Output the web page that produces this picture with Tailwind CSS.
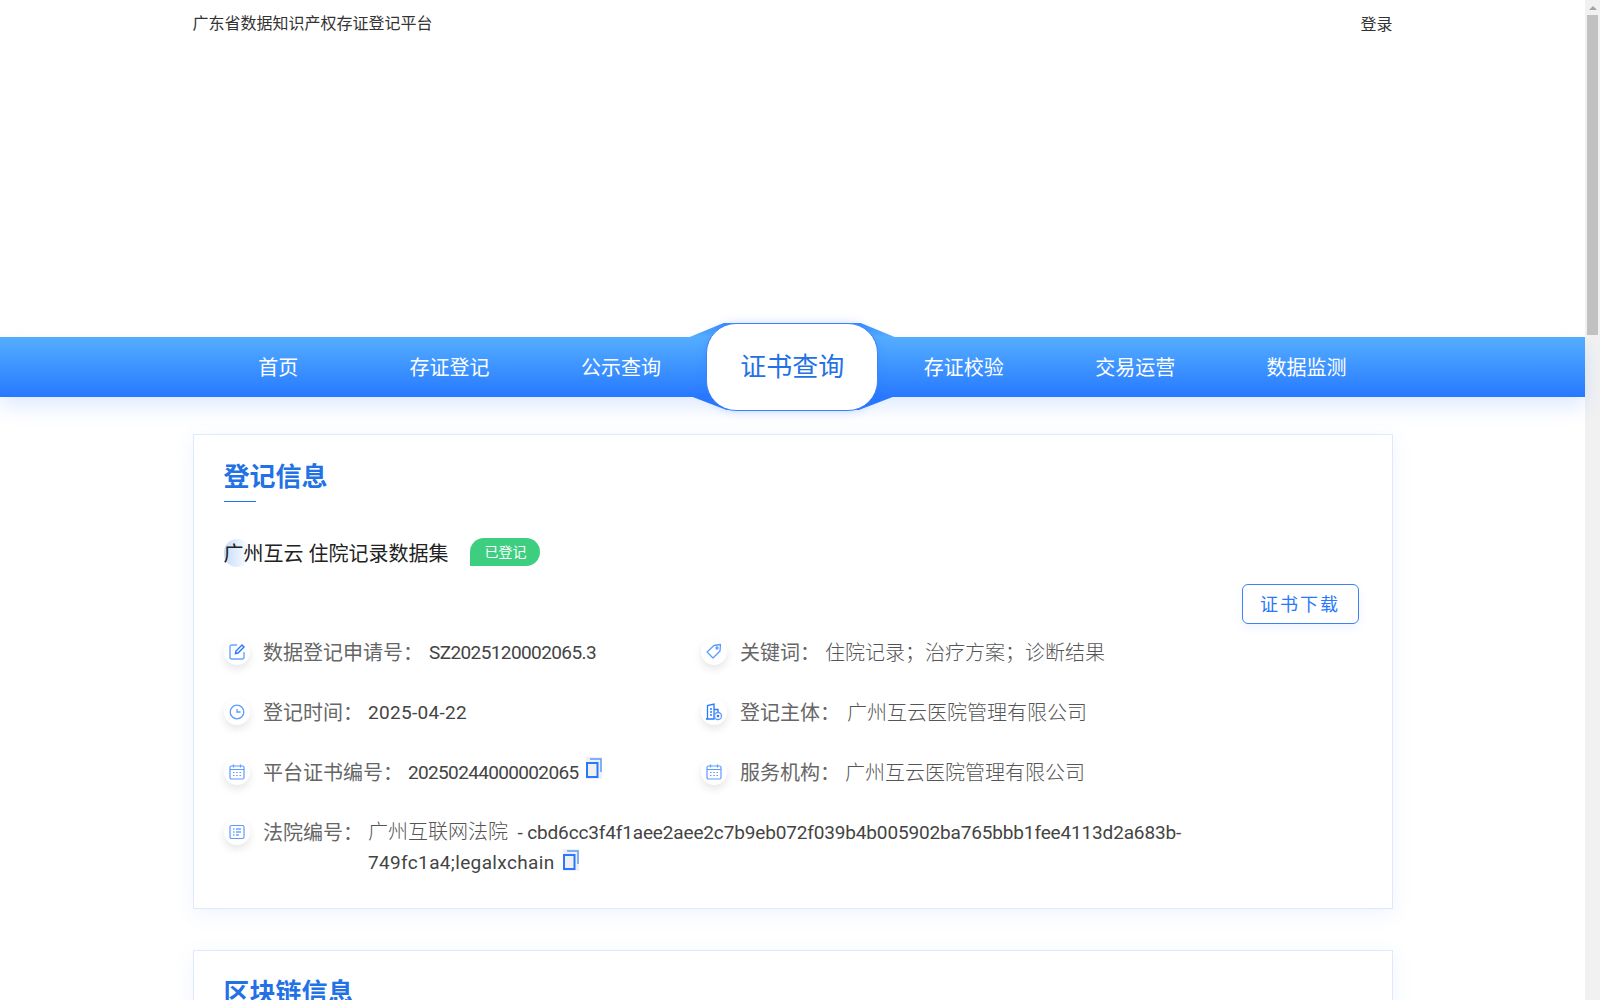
<!DOCTYPE html>
<html lang="zh"><head><meta charset="utf-8"><script src="https://cdn.jsdelivr.net/npm/@tailwindcss/browser@4"></script></head>
<body class="bg-white h-screen overflow-hidden flex font-['Roboto','Noto_Sans_CJK_SC',sans-serif] text-[#333]">
<div class="flex-1 min-w-0">
<header class="h-[323px]">
  <div class="w-[1200px] mx-auto flex justify-between pt-3 text-base leading-[24px]"><span>广东省数据知识产权存证登记平台</span><span class="mt-px">登录</span></div>
</header>
<nav class="relative h-[87px]">
  <div class="absolute left-0 right-0 top-[14px] h-[60px] bg-gradient-to-b from-[#55adff] to-[#2878ff] shadow-[0_10px_20px_rgba(40,120,255,0.15)]"></div>
  <div class="relative w-[1200px] mx-auto h-full flex items-center text-white text-xl">
    <a class="w-[171.4px] shrink-0 text-center pt-0.5">首页</a>
    <a class="w-[171.4px] shrink-0 text-center pt-0.5">存证登记</a>
    <a class="w-[171.4px] shrink-0 text-center pt-0.5">公示查询</a>
    <div class="relative w-[171.4px] shrink-0 h-full flex justify-center items-center">
      <div class="absolute top-0 left-[-17px] w-[205px] h-[14px] bg-gradient-to-b from-[#3a8cff] to-[#55adff] [clip-path:polygon(0_14px,34px_0,171px_0,205px_14px)]"></div>
      <div class="absolute top-[74px] left-[-14px] w-[200px] h-[13px] bg-[#2878ff] [clip-path:polygon(0_0,200px_0,166px_13px,34px_13px)]"></div>
      <a class="relative shrink-0 w-[172px] h-[88px] rounded-[30px] bg-white border border-[#3b82f6] flex items-center justify-center pt-0.5 text-[#2272e6] text-[26px] shadow-[0_0_10px_rgba(40,120,255,0.25)]">证书查询</a>
    </div>
    <a class="w-[171.4px] shrink-0 text-center pt-0.5">存证校验</a>
    <a class="w-[171.4px] shrink-0 text-center pt-0.5">交易运营</a>
    <a class="w-[171.4px] shrink-0 text-center pt-0.5">数据监测</a>
  </div>
</nav>
<main class="w-[1200px] mx-auto pt-6">
  <section class="border border-[#dfe9fb] h-[475px] px-[30px] pt-6 shadow-[0_5px_20px_rgba(40,120,255,0.08)]">
    <h2 class="text-[26px] font-bold text-[#2272e6] leading-[36px]">登记信息</h2>
    <div class="w-8 h-px bg-[#2272e6] mt-1.5"></div>
    <div class="relative flex items-center mt-[37px] h-7 text-xl">
      <span class="absolute left-0 top-0 w-[26px] h-7 rounded-full bg-gradient-to-r from-[#c6dcfb] to-white"></span>
      <span class="relative pt-px text-[#222]">广州互云 住院记录数据集</span>
      <span class="relative ml-[22px] -mt-0.5 w-[70px] text-center bg-[#3dce80] text-white text-sm rounded-[14px_14px_14px_0] h-7 leading-7">已登记</span>
    </div>
    <div class="flex justify-end mt-[17px] mr-[3px]"><button class="w-[117px] h-10 pt-px border border-[#3b82f6] rounded-md text-[#2878ff] text-lg tracking-[2px] shadow-[0_4px_8px_rgba(40,120,255,0.08)]">证书下载</button></div>
    <div class="grid grid-cols-[477px_1fr] gap-y-[30px] mt-[14px] text-xl leading-[30px] text-[#666]">

      <div class="flex">
        <span class="w-[26px] h-[26px] mt-px mr-[13.500px] shrink-0 rounded-full bg-white shadow-[0_4px_8px_rgba(0,0,0,0.1)] flex items-center justify-center">
          <svg class="w-[18px] h-[18px]" viewBox="0 0 18 18" fill="none" stroke="#6aa5ff" stroke-width="1.400"><path d="M9 2H4a2 2 0 0 0-2 2V14a2 2 0 0 0 2 2h10a2 2 0 0 0 2-2V9"/><path d="M7.500 10.500 8 8l6-6 2 2-6 6z" stroke="#2878ff"/></svg>
        </span>
        <span>数据登记申请号：</span><span class="ml-[6px] text-[#444] text-[19px] tracking-[-0.6px]">SZ2025120002065.3</span>
      </div>
      <div class="flex">
        <span class="w-[26px] h-[26px] mt-px mr-[13.500px] shrink-0 rounded-full bg-white shadow-[0_4px_8px_rgba(0,0,0,0.1)] flex items-center justify-center">
          <svg class="w-[18px] h-[18px]" viewBox="0 0 18 18" fill="none" stroke="#5b9bff" stroke-width="1.300"><path d="M2 9 9 2.500 15.500 1.500 15 8 8 15z" stroke-linejoin="round"/><circle cx="12" cy="5" r="1"/></svg>
        </span>
        <span>关键词：</span><span class="ml-[5px] font-light text-[#555]">住院记录；治疗方案；诊断结果</span>
      </div>

      <div class="flex">
        <span class="w-[26px] h-[26px] mt-px mr-[13.500px] shrink-0 rounded-full bg-white shadow-[0_4px_8px_rgba(0,0,0,0.1)] flex items-center justify-center">
          <svg class="w-[18px] h-[18px]" viewBox="0 0 18 18" fill="none" stroke="#5b9bff" stroke-width="1.300"><circle cx="9" cy="9" r="6.800"/><path d="M9 6V9H12.500"/></svg>
        </span>
        <span>登记时间：</span><span class="ml-[5px] text-[#444] text-[19px] tracking-[0.3px]">2025-04-22</span>
      </div>
      <div class="flex">
        <span class="w-[26px] h-[26px] mt-px mr-[13.500px] shrink-0 rounded-full bg-white shadow-[0_4px_8px_rgba(0,0,0,0.1)] flex items-center justify-center">
          <svg class="w-[18px] h-[18px]" viewBox="0 0 18 18" fill="none" stroke="#2878ff" stroke-width="1.300"><path d="M2.500 16V2.500L9 1V16H1M9 6.500H13V9M5 6H7M5 9H7M5 12H7"/><circle cx="13" cy="13" r="3.500" stroke="#5b9bff"/><circle cx="13" cy="13" r="1.300" fill="#2878ff" stroke="none"/></svg>
        </span>
        <span>登记主体：</span><span class="ml-[7px] font-light text-[#555]">广州互云医院管理有限公司</span>
      </div>

      <div class="flex">
        <span class="w-[26px] h-[26px] mt-px mr-[13.500px] shrink-0 rounded-full bg-white shadow-[0_4px_8px_rgba(0,0,0,0.1)] flex items-center justify-center">
          <svg class="w-[18px] h-[18px]" viewBox="0 0 18 18" fill="none" stroke="#5b9bff" stroke-width="1.200"><rect x="2" y="3" width="14" height="13" rx="1.500"/><path d="M2 6.500H16M5.500 1.500V4.500M12.500 1.500V4.500"/><path d="M5 9.500H6.500M8.300 9.500H9.800M11.500 9.500H13M5 12.500H6.500M8.300 12.500H9.800M11.500 12.500H13"/></svg>
        </span>
        <span>平台证书编号：</span><span class="ml-[5px] text-[#444] text-[19px] tracking-[-0.65px]">20250244000002065</span>
        <svg class="ml-2 -mt-px w-4 h-[22px] shrink-0" viewBox="0 0 16 22" fill="none"><rect width="16" height="22" fill="#f0f0f0"/><rect x="1" y="6" width="10.500" height="14" stroke="#2878ff" stroke-width="2"/><path d="M4 2H15V15" stroke="#5b9bff" stroke-width="1.500"/></svg>
      </div>
      <div class="flex">
        <span class="w-[26px] h-[26px] mt-px mr-[13.500px] shrink-0 rounded-full bg-white shadow-[0_4px_8px_rgba(0,0,0,0.1)] flex items-center justify-center">
          <svg class="w-[18px] h-[18px]" viewBox="0 0 18 18" fill="none" stroke="#5b9bff" stroke-width="1.200"><rect x="2" y="3" width="14" height="13" rx="1.500"/><path d="M2 6.500H16M5.500 1.500V4.500M12.500 1.500V4.500"/><path d="M5 9.500H6.500M8.300 9.500H9.800M11.500 9.500H13M5 12.500H6.500M8.300 12.500H9.800M11.500 12.500H13"/></svg>
        </span>
        <span>服务机构：</span><span class="ml-[5px] font-light text-[#555]">广州互云医院管理有限公司</span>
      </div>

      <div class="col-span-2 flex">
        <span class="w-[26px] h-[26px] mt-px mr-[13.500px] shrink-0 rounded-full bg-white shadow-[0_4px_8px_rgba(0,0,0,0.1)] flex items-center justify-center">
          <svg class="w-[18px] h-[18px]" viewBox="0 0 18 18" fill="none" stroke="#5b9bff" stroke-width="1.200"><rect x="2" y="2.500" width="14" height="13" rx="1.500"/><path d="M5 6H6.500M8 6H13M5 9H6.500M8 9H13M5 12H6.500M8 12H11" stroke="#2878ff"/></svg>
        </span>
        <span class="shrink-0">法院编号：</span>
        <div class="ml-[5px] w-[850px] text-[#444] text-[19px]"><span class="font-light text-xl text-[#555]">广州互联网法院</span><span class="ml-[5px] tracking-[-0.15px]"> - cbd6cc3f4f1aee2aee2c7b9eb072f039b4b005902ba765bbb1fee4113d2a683b-</span><span class="tracking-[0.35px]">749fc1a4;legalxchain</span><svg class="inline-block ml-2 -mt-2 w-4 h-[22px]" viewBox="0 0 16 22" fill="none"><rect width="16" height="22" fill="#f0f0f0"/><rect x="1" y="6" width="10.500" height="14" stroke="#2878ff" stroke-width="2"/><path d="M4 2H15V15" stroke="#5b9bff" stroke-width="1.500"/></svg></div>
      </div>
    </div>
  </section>
  <section class="border border-[#dfe9fb] mt-[41px] h-[400px] px-[30px] pt-6 shadow-[0_5px_20px_rgba(40,120,255,0.08)]"><h2 class="text-[26px] font-bold text-[#2272e6] leading-[36px]">区块链信息</h2></section>
</main>
</div>
<aside class="w-[15px] shrink-0 h-full bg-[#f1f1f1] flex flex-col items-center">
  <div class="h-[15px] flex items-center justify-center"><span class="w-0 h-0 border-x-[4px] border-x-transparent border-b-[4px] border-b-[#a3a3a3]"></span></div>
  <div class="w-[11px] h-[320px] bg-[#c1c1c1]"></div>
</aside>
</body></html>
